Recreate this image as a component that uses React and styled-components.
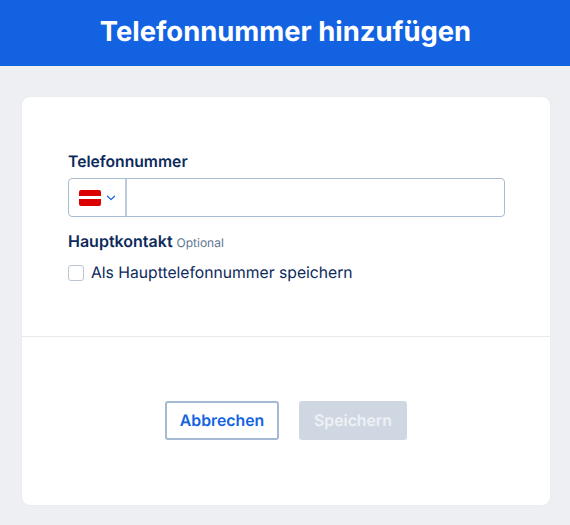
import React from "react";
import styled, { createGlobalStyle } from "styled-components";

const Global = createGlobalStyle`
  html, body { margin: 0; padding: 0; background: #edeff3; }
  body { font-family: Inter, "Liberation Sans", sans-serif; text-rendering: geometricPrecision; }
  * { box-sizing: border-box; }
`;

const Page = styled.div`
  width: 570px;
  height: 525px;
  overflow: hidden;
  background: #edeff3;
`;

const Header = styled.header`
  height: 66px;
  background: #1262e2;
  display: flex;
  align-items: center;
  justify-content: center;
`;

const Title = styled.h1`
  margin: 0 0 4px 1px;
  color: #fff;
  font-size: 27.4px;
  font-weight: 700;
  line-height: 32px;
`;

const Card = styled.main`
  margin: 31px 20px 0 22px;
  height: 408px;
  background: #fff;
  border-radius: 8px;
  box-shadow: 0 0 2px rgba(20, 40, 80, 0.06);
  display: flex;
  flex-direction: column;
`;

const Form = styled.section`
  height: 240px;
  padding: 55px 45px 0 46px;
  border-bottom: 1px solid #e6e9ee;
  display: flex;
  flex-direction: column;
`;

const Label = styled.div`
  color: #0c2a5b;
  font-size: ${p => p.$size}px;
  font-weight: 600;
  line-height: 20px;
`;

const PhoneField = styled.div`
  margin-top: 6px;
  height: 39px;
  display: flex;
  border: 1px solid #a9bbd0;
  border-radius: 4px;
`;

const CountryButton = styled.div`
  width: 58px;
  border-right: 2px solid #bccbdc;
  display: flex;
  align-items: center;
  padding-left: 10px;
  gap: 5px;
`;

const Flag = styled.div`
  width: 22px;
  height: 16px;
  border-radius: 2px;
  overflow: hidden;
  display: flex;
  flex-direction: column;
  background: #fff;
  justify-content: space-between;
`;

const Stripe = styled.div`
  height: 6.5px;
  background: #dd0000;
`;

const PhoneInput = styled.div`
  flex: 1;
`;

const ContactRow = styled.div`
  margin-top: 14px;
  display: flex;
  align-items: baseline;
  gap: 4px;
`;

const Optional = styled.span`
  color: #5f7691;
  font-size: 12px;
  line-height: 16px;
`;

const CheckRow = styled.label`
  margin-top: 11px;
  display: flex;
  align-items: center;
  gap: 7px;
  color: #0c2a5b;
  font-size: 15.7px;
  line-height: 22px;
`;

const Box = styled.span`
  width: 16px;
  height: 16px;
  border: 1.5px solid #bcc6d2;
  border-radius: 3px;
  background: #fff;
`;

const Actions = styled.footer`
  padding-top: 65px;
  display: flex;
  justify-content: center;
  gap: 20px;
`;

const Button = styled.div`
  height: 39px;
  width: ${p => p.$width}px;
  margin-top: -1px;
  display: flex;
  align-items: center;
  justify-content: center;
  border-radius: 3px;
  font-size: 15.8px;
  font-weight: 600;
  color: ${p => (p.$disabled ? "#eef1f5" : "#1262e2")};
  background: ${p => (p.$disabled ? "#cfd8e2" : "#fff")};
  border: ${p => (p.$disabled ? "none" : "2px solid #a5b9d2")};
`;

export default function App() {
  return (
    <Page>
      <Global />
      <Header><Title>Telefonnummer hinzufügen</Title></Header>
      <Card>
        <Form>
          <Label $size={15.7}>Telefonnummer</Label>
          <PhoneField>
            <CountryButton>
              <Flag><Stripe /><Stripe /></Flag>
              <svg width="10" height="6" viewBox="0 0 10 6" fill="none">
                <path d="M1.5 1.2 5 4.6l3.5-3.4" stroke="#1262e2" strokeWidth="1.2" strokeLinecap="round" strokeLinejoin="round" />
              </svg>
            </CountryButton>
            <PhoneInput />
          </PhoneField>
          <ContactRow>
            <Label $size={16}>Hauptkontakt</Label>
            <Optional>Optional</Optional>
          </ContactRow>
          <CheckRow><Box />Als Haupttelefonnummer speichern</CheckRow>
        </Form>
        <Actions>
          <Button $width={114}>Abbrechen</Button>
          <Button $width={108} $disabled>Speichern</Button>
        </Actions>
      </Card>
    </Page>
  );
}
